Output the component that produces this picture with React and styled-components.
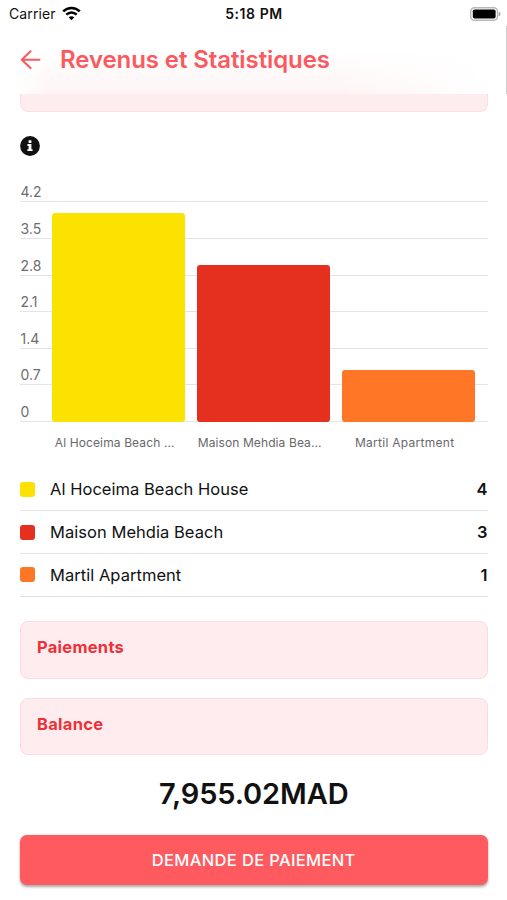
import React from "react";
import styled, { createGlobalStyle } from "styled-components";

const GlobalStyle = createGlobalStyle`
  * { box-sizing: border-box; }
  body { margin: 0; background: #fff; }
`;

const Screen = styled.div`
  position: relative;
  display: flex;
  flex-direction: column;
  width: 507px;
  height: 900px;
  overflow: hidden;
  background: #fff;
  color: #111;
  font-family: Inter, "Liberation Sans", sans-serif;
`;

const StatusBar = styled.div`
  display: grid;
  grid-template-columns: 1fr auto 1fr;
  align-items: center;
  height: 27px;
  padding: 0 6px 0 9px;
`;

const Carrier = styled.div`
  display: flex;
  align-items: center;
  gap: 6px;
  font-size: 14px;
  line-height: 27px;
  letter-spacing: 0.12px;
`;

const Clock = styled.div`
  margin-left: -2px;
  font-size: 14px;
  font-weight: 600;
  letter-spacing: 0.55px;
`;

const Battery = styled.svg`
  justify-self: end;
`;

const Header = styled.header`
  display: flex;
  align-items: center;
  height: 67px;
  padding: 0 20px 2px;
  background:
    linear-gradient(to right, #fff 0, #fff 20px, transparent 50px, transparent 340px, #fff 487px),
    linear-gradient(#fff 35%, #fff4f4 100%);
`;

const Title = styled.h1`
  margin: 0 0 0 19px;
  color: #fa5a5f;
  font-size: 24px;
  font-weight: 600;
  line-height: 30px;
  letter-spacing: -0.09px;
`;

const Scrollbar = styled.div`
  position: absolute;
  top: 26px;
  right: 0;
  width: 1.5px;
  height: 68px;
  background: #d0d0d0;
`;

const Content = styled.main`
  display: flex;
  flex-direction: column;
  padding: 0 19.5px 0 20px;
`;

const ScrolledCard = styled.div`
  height: 18px;
  border: 1px solid #fbdfe2;
  border-top: 0;
  border-radius: 0 0 8px 8px;
  background: #feecee;
`;

const InfoIcon = styled.svg`
  margin-top: 24px;
`;

const Chart = styled.section`
  display: grid;
  grid-template-rows: 256.4px 20px;
  margin-top: 9.6px;
`;

const Scale = styled.div`
  grid-area: 1 / 1;
  display: grid;
  grid-template-rows: repeat(7, 36.65px);
`;

const Tick = styled.div`
  display: flex;
  align-items: flex-end;
  padding: 0 0 1px 0.5px;
  border-bottom: 1.4px solid #e4e4e5;
  color: #6d6d70;
  font-size: 14px;
  line-height: 17px;
`;

const Bars = styled.div`
  grid-area: 1 / 1;
  display: grid;
  grid-template-columns: repeat(3, 133px);
  column-gap: 12px;
  align-items: end;
  padding-left: 32px;
`;

const Bar = styled.div`
  height: ${({ $value }) => $value * 52.3}px;
  border-radius: 3px;
  background: ${({ $color }) => $color};
`;

const BarNames = styled.div`
  grid-area: 2 / 1;
  display: grid;
  grid-template-columns: repeat(3, 133px);
  column-gap: 12px;
  padding: 13px 0 0 28.2px;
`;

const BarName = styled.div`
  color: #68686b;
  font-size: 12px;
  line-height: 16px;
  letter-spacing: ${({ $spacing }) => $spacing}px;
  text-align: center;
  white-space: nowrap;
`;

const Legend = styled.ul`
  margin: 26.4px 0 0;
  padding: 0;
  list-style: none;
`;

const LegendRow = styled.li`
  display: grid;
  grid-template-columns: 15px 1fr auto;
  column-gap: 15px;
  align-items: center;
  height: 42.8px;
  border-bottom: 1px solid #e2e2e3;
  font-size: 16.5px;
  letter-spacing: 0.04px;
`;

const Swatch = styled.span`
  width: 15px;
  height: 15px;
  border-radius: 3px;
  background: ${({ $color }) => $color};
`;

const Count = styled.strong`
  font-weight: 600;
`;

const Card = styled.section`
  height: ${({ $height }) => $height}px;
  margin-top: ${({ $gap }) => $gap}px;
  padding: 15px 16px;
  border: 1px solid #fbdbdf;
  border-radius: 8px;
  background: #feecee;
`;

const CardTitle = styled.h2`
  margin: 0;
  color: #ee3037;
  font-size: 16.5px;
  font-weight: 700;
  line-height: 20px;
  letter-spacing: 0.27px;
`;

const Amount = styled.div`
  margin-top: 19.5px;
  font-size: 29px;
  font-weight: 600;
  line-height: 38px;
  letter-spacing: -0.1px;
  text-align: center;
`;

const RequestButton = styled.button`
  height: 50px;
  margin-top: 22.5px;
  padding: 0;
  border: 0;
  border-radius: 7px;
  background: #ff5a60;
  box-shadow: 0 1.5px 3px rgba(0, 0, 0, 0.35);
  color: #fff;
  font: 500 16.5px/50px Inter, "Liberation Sans", sans-serif;
  letter-spacing: 0.35px;
`;

const BOOKINGS = [
  { name: "Al Hoceima Beach House", short: "Al Hoceima Beach ...", spacing: 0.12, value: 4, color: "#fce200" },
  { name: "Maison Mehdia Beach", short: "Maison Mehdia Bea...", spacing: 0.1, value: 3, color: "#e5301f" },
  { name: "Martil Apartment", short: "Martil Apartment", spacing: 0.28, value: 1, color: "#ff7626" },
];

const TICKS = ["4.2", "3.5", "2.8", "2.1", "1.4", "0.7", "0"];

export default function App() {
  return (
    <Screen>
      <GlobalStyle />
      <StatusBar>
        <Carrier>
          Carrier
          <svg width="19" height="15" viewBox="0 0 19 15" fill="none" stroke="#000" strokeWidth="2.5">
            <path d="M1.2 5.4C5.9.8 13.1.8 17.8 5.4" />
            <path d="M4.3 8.7c3-2.9 7.4-2.9 10.4 0" />
            <path d="M6.7 11.3c1.7-1.4 3.9-1.4 5.6 0L9.5 14.2z" fill="#000" stroke="none" />
          </svg>
        </Carrier>
        <Clock>5:18 PM</Clock>
        <Battery width="31" height="14" viewBox="0 0 31 14">
          <rect x=".7" y=".7" width="26.8" height="12.6" rx="3.8" fill="#fff" stroke="#b8b8b8" strokeWidth="1.4" />
          <rect x="2.8" y="2.4" width="22.8" height="9.2" rx="1.8" fill="#000" />
          <path d="M28.7 4.7c2.4.7 2.4 3.9 0 4.6z" fill="#aaa" />
        </Battery>
      </StatusBar>
      <Header>
        <svg width="21" height="20" viewBox="0 0 21 20" fill="none" stroke="#fa5a5f" strokeWidth="2.1" strokeLinecap="round" strokeLinejoin="round">
          <path d="M10.5 1.3 1.8 9.7l8.7 8.4M2 9.7h17.4" />
        </svg>
        <Title>Revenus et Statistiques</Title>
      </Header>
      <Scrollbar />
      <Content>
        <ScrolledCard />
        <InfoIcon width="20" height="20" viewBox="0 0 20 20">
          <circle cx="10" cy="10" r="9.9" fill="#111" />
          <path d="M8.6 4.2h2.8v2.7H8.6zM7.4 8.1h4v5.1h1.2v1.9H7.4v-1.9h1.2V10H7.4z" fill="#fff" />
        </InfoIcon>
        <Chart>
          <Scale>
            {TICKS.map((tick) => <Tick key={tick}>{tick}</Tick>)}
          </Scale>
          <Bars>
            {BOOKINGS.map((b) => <Bar key={b.name} $value={b.value} $color={b.color} />)}
          </Bars>
          <BarNames>
            {BOOKINGS.map((b) => <BarName key={b.name} $spacing={b.spacing}>{b.short}</BarName>)}
          </BarNames>
        </Chart>
        <Legend>
          {BOOKINGS.map((b) => (
            <LegendRow key={b.name}>
              <Swatch $color={b.color} />
              <span>{b.name}</span>
              <Count>{b.value}</Count>
            </LegendRow>
          ))}
        </Legend>
        <Card $height={57.6} $gap={24.6}><CardTitle>Paiements</CardTitle></Card>
        <Card $height={57} $gap={19.1}><CardTitle>Balance</CardTitle></Card>
        <Amount>7,955.02MAD</Amount>
        <RequestButton>DEMANDE DE PAIEMENT</RequestButton>
      </Content>
    </Screen>
  );
}
